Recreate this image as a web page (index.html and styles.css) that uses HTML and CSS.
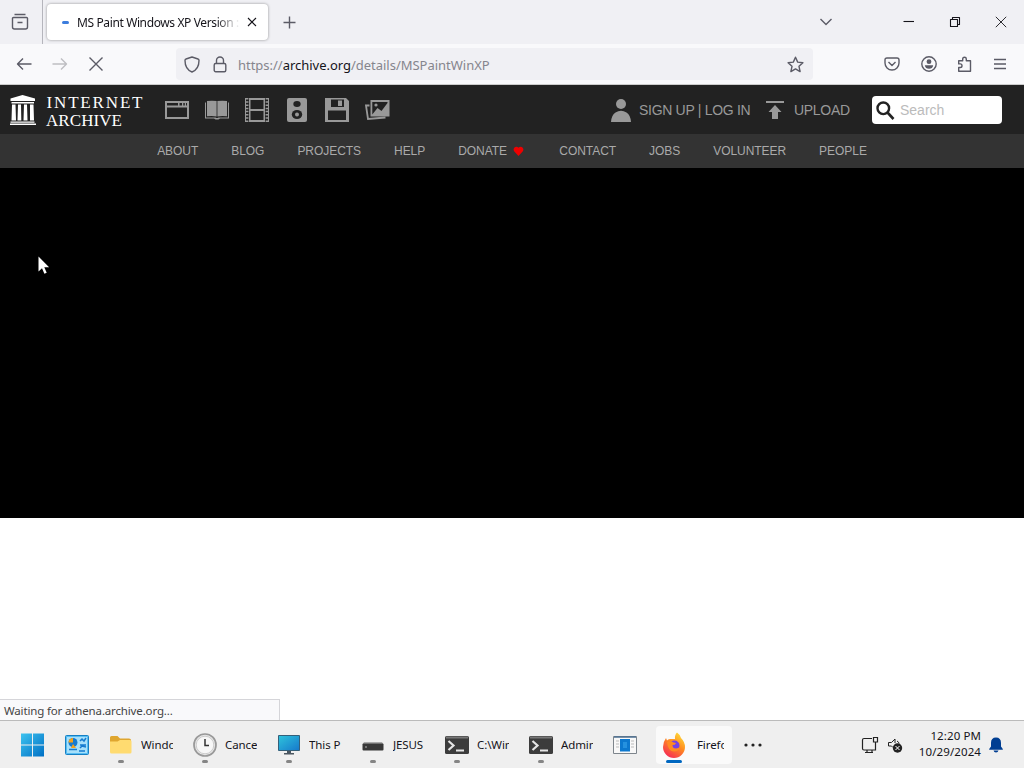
FILE: index.html
```html
<!DOCTYPE html>
<html lang="en">
<head>
  <meta charset="UTF-8">
  <meta name="viewport" content="width=device-width, initial-scale=1.0">
  <title>MS Paint Windows XP Version</title>
  <link rel="stylesheet" href="styles.css">
</head>
<body>
  <!-- Tabs -->
  <div class="tabbar">
    <div class="tabbar__view">
      <svg class="line" width="18" height="18" viewBox="0 0 18 18"><path d="M3.5 1.5h11M1.5 6.500v-1q0-1 1-1h13q1 0 1 1v1M1.500 5v9q0 2 2 2h11q2 0 2-2V5M6.500 9.500h5"/></svg>
    </div>
    <div class="tab">
      <span class="tab__loading"></span>
      <span class="tab__title">MS Paint Windows XP Version :</span>
      <svg class="line line--black" width="10" height="10" viewBox="0 0 10 10"><path d="M1 1l8 8M9 1L1 9"/></svg>
    </div>
    <svg class="line tabbar__new" width="13" height="13" viewBox="0 0 13 13"><path d="M6.500 .5v12M.5 6.500h12"/></svg>
    <div class="window-buttons">
      <svg class="line" width="14" height="10" viewBox="0 0 14 10"><path d="M1.500 2l5.500 5.500L12.500 2"/></svg>
      <svg class="line line--black" width="12" height="12" viewBox="0 0 12 12"><path d="M.5 5.500h10.500"/></svg>
      <svg class="line line--black" width="12" height="12" viewBox="0 0 12 12"><path d="M1.500 3.500h7v7h-7zM3.500 3.500v-2h7v7h-2"/></svg>
      <svg class="line line--black line--thin" width="12" height="12" viewBox="0 0 12 12"><path d="M.8.800l10.400 10.400M11.200.800L.8 11.200"/></svg>
    </div>
  </div>

  <!-- Address bar -->
  <div class="toolbar">
    <div class="toolbar__nav">
      <svg class="line" width="16" height="16" viewBox="0 0 16 16"><path d="M15.500 8H1.500M7 2.500L1.500 8 7 13.500"/></svg>
      <svg class="line line--disabled" width="16" height="16" viewBox="0 0 16 16"><path d="M.5 8h14M9 2.500L14.500 8 9 13.500"/></svg>
      <svg class="line" width="16" height="16" viewBox="0 0 16 16"><path d="M1.500 1.500l13 13M14.500 1.500l-13 13"/></svg>
    </div>
    <div class="urlbar">
      <svg class="line" width="16" height="17" viewBox="0 0 16 17"><path d="M8 1l6 2q1 .3 1 1.500C15 10 13 14 8 16 3 14 1 10 1 4.500Q1 3.300 2 3z"/></svg>
      <svg class="line" width="14" height="17" viewBox="0 0 14 17"><rect x="1.200" y="7.500" width="11.600" height="8.200" rx="1.500"/><path d="M3.500 7.500V4.500a3.500 3.500 0 0 1 7 0v3"/></svg>
      <span class="urlbar__text">https://<b class="urlbar__host">archive.org</b>/details/MSPaintWinXP</span>
      <svg class="line urlbar__star" width="17" height="17" viewBox="0 0 17 17"><path d="M8.500 1.200l2.200 4.900 5.200.6-3.900 3.600 1.100 5.300-4.600-2.700-4.600 2.700L5 10.300 1.100 6.700l5.200-.6z"/></svg>
    </div>
    <div class="toolbar__actions">
      <svg class="line" width="16" height="16" viewBox="0 0 16 16"><path d="M3 2h10q2 0 2 2v3a7 7 0 0 1-14 0V4q0-2 2-2zM4.500 6L8 9.500 11.500 6"/></svg>
      <svg class="line" width="16" height="16" viewBox="0 0 16 16"><circle cx="8" cy="8" r="7.200"/><g fill="#5b5b66" stroke="none"><circle cx="8" cy="5.700" r="2.400"/><path d="M3.800 9.300h8.400q-.5 3.500-4.200 3.500T3.800 9.300z"/></g></svg>
      <svg class="line" width="16" height="16" viewBox="0 0 16 16"><path d="M1.700 15.200v-3.700h1.500a1.800 1.800 0 0 0 0-3.600H1.700V4.800h4V3a1.800 1.800 0 0 1 3.600 0v1.800h4.200v10.400z"/></svg>
      <svg class="line" width="14" height="14" viewBox="0 0 14 14"><path d="M1 2.500h12M1 7h12M1 11.500h12"/></svg>
    </div>
  </div>

  <!-- Internet Archive page -->
  <div class="page">
    <header class="header">
      <svg class="header__logo" width="134" height="34" viewBox="0 0 134 34" fill="#fff">
        <path d="M13.500 2L26 5.500v2.500H1.500V5.500zM2.500 9h22.500v1.500H2.500zM3 11.500h3.500l.5 16H2.500zM9 11.500h3l.3 16H8.500zM15 11.500h3l.5 16h-4zM21 11.500h3.500l.5 16h-4zM1.500 28.500h24v1.300h-24zM1 30.500h26v1.500H1z"/>
        <text class="logo-text" x="37.500" y="15" textLength="96">INTERNET</text>
        <text class="logo-text" x="37" y="32.500" textLength="76">ARCHIVE</text>
      </svg>
      <nav class="media">
        <svg width="24" height="24" viewBox="0 0 24 24"><path d="M0 3h24v18H0zM2 9.500v9.500h20V9.500zM2 5v2.500h11V5zM14.500 5v2.500H17V5zM18.300 5v2.500h1.500V5zM21 5v2.500h1V5z" fill-rule="evenodd"/></svg>
        <svg width="24" height="24" viewBox="0 0 24 24"><path d="M2 3q5-.6 9.600 0v15.500Q8 17.800 2 18.300zM12.400 3q5-.6 9.600 0v15.300q-6-.5-9.600.2zM0 4.500h1v15h9.500l1 .5h1l1-.5H23v-15h1V20.500h-9l-1.500 1h-3L9 20.500H0z"/></svg>
        <svg width="24" height="26" viewBox="0 0 24 26"><path d="M4 1h16v24H4zM5.500 3v9h13V3zM5.500 14v9h13v-9z" fill-rule="evenodd"/><path d="M2.200 1v24M21.800 1v24" stroke="#999" stroke-width="2.400" stroke-dasharray="1.500 1.710"/><path d="M.5 1v24M23.500 1v24" stroke="#999"/></svg>
        <svg width="24" height="24" viewBox="0 0 24 24"><rect x="2" width="20" height="24" rx="2"/><g fill="#222"><ellipse cx="12" cy="6" rx="3.700" ry="3"/><ellipse cx="12" cy="16.500" rx="5.200" ry="4.600"/></g><circle cx="12" cy="16.500" r="2"/></svg>
        <svg width="24" height="24" viewBox="0 0 24 24"><path d="M0 0h21l3 3v21H0zM6 1.500V9h13V1.500zM3 12.500V22h18v-9.500z" fill-rule="evenodd"/><path d="M13 2.500h4V8h-4z"/></svg>
        <svg width="25" height="24" viewBox="0 0 25 24"><path d="M5.500 2H24.500v16.500H5.500zM7.300 4v12.500L12.500 10l4 3 6-8V4z" fill-rule="evenodd"/><circle cx="11" cy="7" r="1.600"/><path d="M4.500 7.500H1l2 13.500 17.500-1.500" fill="none" stroke="#999" stroke-width="1.800"/></svg>
      </nav>
      <div class="account">
        <svg width="20" height="24" viewBox="0 0 20 24"><circle cx="10" cy="6" r="5"/><path d="M0 24q.5-7 4.500-9.500 5.500-3.500 11 0Q19.500 17 20 24z"/></svg>
        <span class="account__text">SIGN UP | LOG IN</span>
      </div>
      <div class="upload">
        <svg width="18" height="20" viewBox="0 0 18 20"><path d="M0 1h18v2H0zM9 5l6.500 7H12v7H6v-7H2.500z"/></svg>
        <span class="upload__text">UPLOAD</span>
      </div>
      <div class="search">
        <svg width="19" height="20" viewBox="0 0 19 20" fill="none" stroke="#222"><circle cx="7.300" cy="8.300" r="5.800" stroke-width="2.400"/><path d="M11.500 12.500l6 6.500" stroke-width="2.600"/></svg>
        <span class="search__text">Search</span>
      </div>
    </header>
    <nav class="menu">
      <span>ABOUT</span>
      <span>BLOG</span>
      <span>PROJECTS</span>
      <span>HELP</span>
      <span>DONATE <svg class="menu__heart" width="11" height="10" viewBox="0 0 12 11" fill="#e00"><path d="M6 11L1.200 5.800C-1 2.500 3.500-1 6 2c2.500-3 7 .5 4.800 3.800z"/></svg></span>
      <span>CONTACT</span>
      <span>JOBS</span>
      <span>VOLUNTEER</span>
      <span>PEOPLE</span>
    </nav>
    <div class="theatre"></div>
    <div class="status">Waiting for athena.archive.org...</div>
    <svg class="cursor" width="12" height="19" viewBox="0 0 12 19"><path d="M.5.500v15l3.500-3.300 2.400 5.500 2.300-1-2.400-5.400h4.800z" fill="#fff"/></svg>
  </div>

  <!-- Taskbar -->
  <div class="taskbar">
    <div class="task task--icon">
      <svg width="24" height="24" viewBox="0 0 24 24"><defs><linearGradient id="win" x2="1" y2="1"><stop stop-color="#3dc3ef"/><stop offset="1" stop-color="#006fc4"/></linearGradient></defs><path d="M1 .5h11v11H1zM13 .5h11v11H13zM1 12.500h11v11H1zM13 12.500h11v11H13z" fill="url(#win)"/></svg>
    </div>
    <div class="task task--control">
      <svg width="24" height="20" viewBox="0 0 24 20"><rect x=".5" y=".5" width="23" height="19" rx="1" fill="#56bdf3" stroke="#1680c4"/><path d="M2 2h20v16H2z" fill="#a7e0fa"/><circle cx="8" cy="7.500" r="4.500" fill="#167bd0"/><path d="M8 7.500V3a4.500 4.500 0 0 0-4.500 4.500z" fill="#f6a21b"/><path d="M4 14.500h8M15 6l2-2 2 2 2-3M15 10h6M15 13l2-2 4 1M14 16h6" fill="none" stroke="#167bd0" stroke-width="1.500"/><path d="M8 9l3 4H6z" fill="#f6a21b"/></svg>
    </div>
    <div class="task task--open">
      <svg width="24" height="24" viewBox="0 0 24 24"><path d="M1 4.500q0-1.500 1.500-1.500h6L11 5.500h9Q22 5.500 22 7v5H1z" fill="#dfa62f"/><path d="M1 8.500h7.500L11 7h10q1.500 0 1.500 1.500v10.500q0 1.500-1.500 1.500H2.500Q1 20.500 1 19z" fill="#ffdb70"/></svg>
      <span class="task__label">Windows</span>
    </div>
    <div class="task task--open">
      <svg width="24" height="24" viewBox="0 0 24 24"><circle cx="12" cy="12" r="11" fill="#e8e8e8" stroke="#999" stroke-width="1.700"/><circle cx="12" cy="12" r="8.800" fill="#f7f7f7" stroke="#ccc"/><path d="M12 6v6.500h4" fill="none" stroke="#333" stroke-width="1.500"/></svg>
      <span class="task__label">Cance</span>
    </div>
    <div class="task task--open">
      <svg width="24" height="24" viewBox="0 0 24 24"><defs><linearGradient id="screen" x2="1" y2="1"><stop stop-color="#2fc4dc"/><stop offset="1" stop-color="#1678cb"/></linearGradient></defs><path d="M1.500 2.500h21v15h-21z" fill="url(#screen)" stroke="#34607a"/><path d="M10 18h4v2h3v1.500H7V20h3z" fill="#4b5660"/></svg>
      <span class="task__label">This P</span>
    </div>
    <div class="task task--open">
      <svg width="24" height="24" viewBox="0 0 24 24"><path d="M3 9h18l1.500 2.500h-21z" fill="#aaa"/><rect x="1.500" y="10.500" width="21" height="7" rx="1" fill="#383838"/><path d="M4 14h2" stroke="#8a8a8a" stroke-width="1.500"/></svg>
      <span class="task__label">JESUS</span>
    </div>
    <div class="task task--open">
      <svg width="24" height="24" viewBox="0 0 24 24"><rect y="3" width="24" height="18" rx="1.500" fill="#3c3c3c"/><path d="M1 4.500h22" stroke="#777" stroke-width="2"/><path d="M3.500 8l5 4.500-5 4.500M11 17.500h8" fill="none" stroke="#e5e5e5" stroke-width="2.200"/></svg>
      <span class="task__label">C:\Wind</span>
    </div>
    <div class="task task--open">
      <svg width="24" height="24" viewBox="0 0 24 24"><rect y="3" width="24" height="18" rx="1.500" fill="#3c3c3c"/><path d="M1 4.500h22" stroke="#777" stroke-width="2"/><path d="M3.500 8l5 4.500-5 4.500M11 17.500h8" fill="none" stroke="#e5e5e5" stroke-width="2.200"/></svg>
      <span class="task__label">Admin</span>
    </div>
    <div class="task task--icon">
      <svg width="24" height="24" viewBox="0 0 24 24"><path d="M.5 3.500h23v17H.5z" fill="#f8f8f8" stroke="#7d858c"/><path d="M1 4h22" stroke="#4d6f91" stroke-width="1.500"/><path d="M3 8h3M3 11h3M3 14h3M18 8h3M18 11h3M18 14h3" stroke="#bbb"/><path d="M7 6h10v12.500H7z" fill="#0c78cf"/><path d="M10 9h4v6h-4z" fill="#2591df"/></svg>
    </div>
    <div class="task task--active">
      <svg width="24" height="26" viewBox="0 0 24 26"><defs><linearGradient id="fox" x1=".8" x2=".2" y2="1"><stop stop-color="#ffe13b"/><stop offset=".45" stop-color="#ff8a20"/><stop offset="1" stop-color="#f52558"/></linearGradient></defs><path d="M15 .5q3 2 4 5.500 4 4 4 9a11 11 0 0 1-22 0q0-5 3-9l1 2.500q1-1.500 3-1.500h5q-.5-4 2-6.500z" fill="url(#fox)"/><circle cx="12.500" cy="13.500" r="5" fill="#7542e5"/><path d="M5 10q4-1.500 6.500.5 2 0 2.500 1-1 1.500-3.500 1.500 0 3.500 3.500 3.500 2.500 0 4-2-1 5-6 5Q6 19.500 5 10z" fill="#ff8a22"/></svg>
      <span class="task__label">Firefox</span>
    </div>
    <svg class="taskbar__more" width="18" height="4" viewBox="0 0 18 4" fill="#222"><circle cx="2" cy="2" r="1.600"/><circle cx="9" cy="2" r="1.600"/><circle cx="16" cy="2" r="1.600"/></svg>
    <div class="tray">
      <svg width="18" height="18" viewBox="0 0 18 18" fill="none" stroke="#222" stroke-width="1.200"><path d="M11 2.500H3q-1.500 0-1.500 1.500v8.500Q1.500 14 3 14h11.500V8M6 14v2.500M11 14v2.500M4 16.500h8M12.500 1.500h4V6h-4zM14.500 6v3"/></svg>
      <svg width="16" height="16" viewBox="0 0 16 16"><path d="M6 10.500L4.500 9H1.500V5.500h3L8 2v4M10 4q2 1 2 2.500" fill="none" stroke="#222"/><circle cx="10.500" cy="11" r="4.700" fill="#222"/><path d="M8.500 9l4 4M12.500 9l-4 4" stroke="#fff"/></svg>
      <div class="clock"><span class="clock__time">12:20 PM</span><span>10/29/2024</span></div>
      <svg width="14" height="16" viewBox="0 0 14 16" fill="#003e92"><path d="M7 .5q5 0 5 5.500v3.500l1.800 2.500v.8H.2V12L2 9.500V6Q2 .5 7 .5zM4.500 13.500h5q-.5 2-2.500 2t-2.500-2z"/></svg>
    </div>
  </div>
</body>
</html>
```

FILE: styles.css
```css
* {
  box-sizing: border-box;
}

body {
  display: flex;
  flex-direction: column;
  height: 768px;
  margin: 0;
  overflow: hidden;
  font-family: "Noto Sans", "Open Sans", sans-serif;
  font-size: 12px;
  color: #15141a;
  background-color: #FFFFFF;
}

svg {
  display: block;
  flex: none;
}

.line {
  fill: none;
  stroke: #5B5B66;
  stroke-width: 1.4;
  stroke-linejoin: round;
}

.line--black {
  stroke: #15141A;
  stroke-width: 1.1;
}

.line--thin {
  stroke-width: 0.9;
}

.line--disabled {
  stroke: #BEBEC2;
}

/* Tabs */
.tabbar {
  display: flex;
  align-items: center;
  height: 44px;
  background-color: #F0F0F4;
}

.tabbar__view {
  display: flex;
  align-items: center;
  width: 43px;
  height: 44px;
  padding-left: 11px;
  border-right: 1px solid #B5B5BC;
}

.tab {
  display: flex;
  align-items: center;
  width: 221px;
  height: 36px;
  margin-left: 4px;
  padding: 0 11px 0 15px;
  border-radius: 4px;
  background-color: #FFFFFF;
  box-shadow: 0 0 3px rgba(0, 0, 0, 0.4);
}

.tab__loading {
  flex: none;
  width: 7px;
  height: 3px;
  margin-right: 8px;
  border-radius: 2px;
  background-color: #3C7DDD;
}

.tab__title {
  flex: 1;
  margin-right: 7px;
  overflow: hidden;
  white-space: nowrap;
  letter-spacing: -0.38px;
  -webkit-mask-image: linear-gradient(to left, transparent, #000 24px);
  mask-image: linear-gradient(to left, transparent, #000 24px);
}

.tabbar__new {
  margin-left: 15px;
}

.window-buttons {
  display: flex;
  align-items: center;
  gap: 34px;
  margin-left: auto;
  padding-right: 17px;
}

.window-buttons svg:first-child {
  margin-right: 36px;
}

/* Address bar */
.toolbar {
  display: flex;
  align-items: center;
  height: 41px;
  border-bottom: 1px solid #CCCCCC;
  background-color: #F9F9FB;
}

.toolbar__nav {
  display: flex;
  gap: 20px;
  width: 176px;
  padding-left: 16px;
}

.urlbar {
  display: flex;
  align-items: center;
  width: 637px;
  height: 32px;
  padding: 0 9px 0 8px;
  border-radius: 4px;
  background-color: #F0F0F4;
}

.urlbar svg + svg {
  margin-left: 13px;
}

.urlbar__text {
  margin-left: 11px;
  padding-top: 1px;
  font-size: 13px;
  letter-spacing: -0.02px;
  color: #85858D;
}

.urlbar__host {
  font-weight: normal;
  color: #15141A;
}

.urlbar__star {
  margin-left: auto;
}

.toolbar__actions {
  display: flex;
  align-items: center;
  gap: 20px;
  margin-left: auto;
  padding-right: 17px;
}

.toolbar__actions svg:first-child {
  margin-right: 1px;
}

/* Page */
.page {
  position: relative;
  display: flex;
  flex-direction: column;
  flex: 1;
  font-family: "Liberation Sans", Arial, sans-serif;
}

.header {
  display: flex;
  align-items: center;
  height: 49px;
  padding: 0 22px 0 9px;
  color: #999999;
  fill: #999999;
  font-size: 14px;
  background-color: #222222;
}

.logo-text {
  font-family: "Liberation Serif", serif;
  font-size: 17px;
}

.media {
  display: flex;
  align-items: center;
  gap: 16px;
  margin-left: 22px;
}

.account {
  display: flex;
  align-items: center;
  gap: 8px;
  margin-left: auto;
}

.account__text {
  width: 111px;
  white-space: nowrap;
  letter-spacing: -0.3px;
}

.upload {
  display: flex;
  align-items: center;
  gap: 10px;
  margin-left: 16px;
}

.upload__text {
  width: 56px;
  letter-spacing: -0.3px;
}

.search {
  display: flex;
  align-items: center;
  gap: 5px;
  width: 130px;
  height: 28px;
  margin-left: 22px;
  padding-left: 4px;
  border-radius: 4px;
  color: #BBBBBB;
  background-color: #FFFFFF;
}

.menu {
  display: flex;
  align-items: center;
  justify-content: center;
  gap: 33px;
  height: 34px;
  font-size: 12px;
  letter-spacing: -0.05px;
  color: #AAAAAA;
  background-color: #333333;
}

.menu__heart {
  display: inline-block;
  margin: 0 2px -1px 3px;
}

.theatre {
  height: 350px;
  background-color: #000000;
}

.status {
  width: 280px;
  height: 21px;
  margin-top: auto;
  padding: 2px 4px;
  border: 1px solid #D5D5D9;
  border-width: 1px 1px 0 0;
  font-family: "Noto Sans", sans-serif;
  font-size: 11.5px;
  line-height: 17px;
  letter-spacing: -0.15px;
  color: #444444;
  background-color: #F9F9FB;
}

.cursor {
  position: absolute;
  top: 171px;
  left: 38px;
}

/* Taskbar */
.taskbar {
  display: flex;
  align-items: center;
  height: 48px;
  padding-left: 20px;
  border-top: 1px solid #BBBBBB;
  font-size: 11.5px;
  background-color: #EFEFEF;
}

.task {
  position: relative;
  display: flex;
  align-items: center;
  gap: 8px;
  flex: none;
  width: 84px;
  height: 38px;
}

.task--icon {
  width: 45px;
}

.task--control {
  width: 44px;
}

.task--open::after,
.task--active::after {
  content: "";
  position: absolute;
  bottom: 1px;
  left: 9px;
  width: 6px;
  height: 3px;
  border-radius: 2px;
  background-color: #858585;
}

.task__label {
  width: 32px;
  overflow: hidden;
  white-space: nowrap;
  letter-spacing: -0.1px;
}

.task--active {
  width: 76px;
  margin-left: -2px;
  padding-left: 6px;
  border-radius: 4px;
  background-color: #FAFAFA;
}

.task--active .task__label {
  width: 27px;
  margin-left: 3px;
}

.task--active::after {
  left: 10px;
  width: 16px;
  background-color: #0067C0;
}

.taskbar__more {
  margin-left: 12px;
}

.tray {
  display: flex;
  align-items: center;
  margin-left: auto;
  padding-right: 21px;
}

.tray svg:nth-child(2) {
  margin-left: 8px;
}

.clock {
  display: flex;
  flex-direction: column;
  align-items: flex-end;
  width: 78px;
  margin-right: 8px;
  padding-bottom: 1px;
  line-height: 16px;
  letter-spacing: 0.1px;
}
```
